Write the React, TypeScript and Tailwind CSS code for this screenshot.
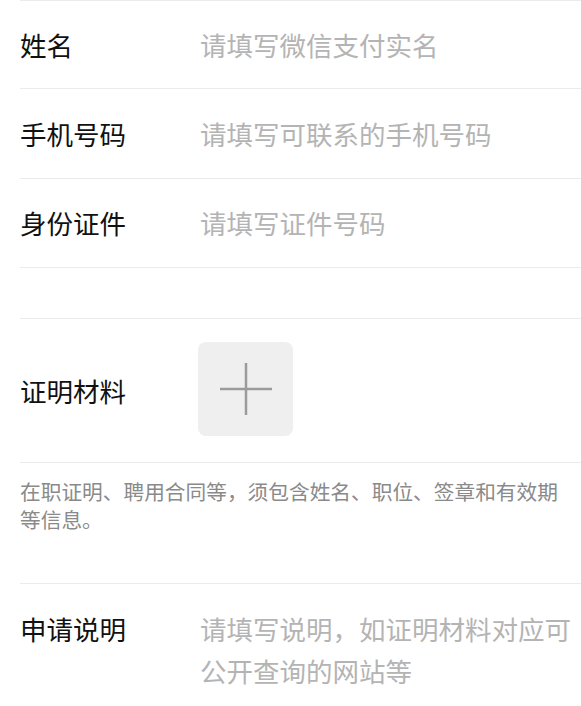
import React from "react";

const font = { fontFamily: '"Noto Sans CJK SC", "Noto Sans", sans-serif' };

function Row({ label, placeholder, h }: { label: string; placeholder: string; h: string }) {
  return (
    <div className={`flex items-center border-b border-[#ebebeb] ${h}`}>
      <div className="w-[180px] shrink-0 text-[26.5px] leading-[36px] text-[#111111]">{label}</div>
      <div className="text-[26.5px] leading-[36px] text-[#b4b4b4]">{placeholder}</div>
    </div>
  );
}

export default function App() {
  return (
    <div className="min-h-[706px] w-[581px] bg-white" style={font}>
      <div className="ml-5 border-t border-[#ebebeb]">
        <Row label="姓名" placeholder="请填写微信支付实名" h="h-[88px]" />
        <Row label="手机号码" placeholder="请填写可联系的手机号码" h="h-[90px]" />
        <Row label="身份证件" placeholder="请填写证件号码" h="h-[89px]" />
      </div>
      <div className="h-[50px]" />
      <div className="ml-5 border-t border-[#ebebeb]">
        <div className="flex h-[144px] items-center border-b border-[#ebebeb]">
          <div className="w-[178px] shrink-0 text-[26.5px] leading-[36px] text-[#111111]">证明材料</div>
          <div className="relative -mt-[3px] flex h-[94px] w-[95px] items-center justify-center rounded-[8px] bg-[#efefef]">
            <svg width="52" height="52" viewBox="0 0 52 52">
              <path d="M26 0V52M0 26H52" stroke="#9b9b9b" strokeWidth="2.5" />
            </svg>
          </div>
        </div>
      </div>
      <div className="px-5 pt-[14px] pb-[50px] text-[20.7px] leading-[28px] text-[#8a8a8a]">
        在职证明、聘用合同等，须包含姓名、职位、签章和有效期等信息。
      </div>
      <div className="ml-5 flex items-start border-t border-[#ebebeb] pt-[24px]">
        <div className="w-[180px] shrink-0 text-[26.5px] leading-[42px] text-[#111111]">申请说明</div>
        <div className="min-w-0 flex-1 text-[26.5px] leading-[42px] text-[#b4b4b4]">请填写说明，如证明材料对应可公开查询的网站等</div>
      </div>
    </div>
  );
}
